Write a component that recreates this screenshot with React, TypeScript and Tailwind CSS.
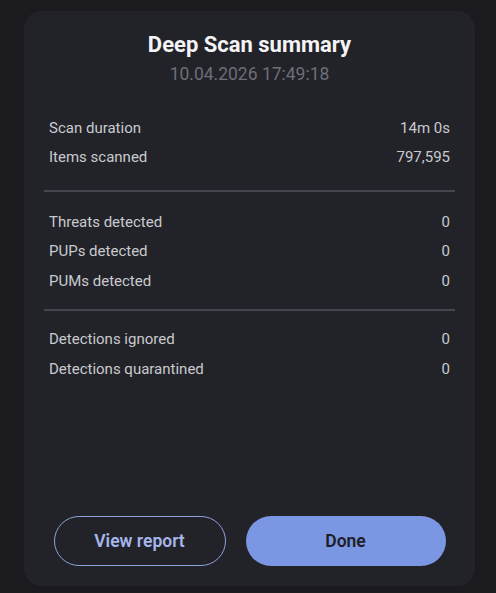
import React from "react";

type Row = { label: string; value: string };

const groups: Row[][] = [
    [
        { label: "Scan duration", value: "14m 0s" },
        { label: "Items scanned", value: "797,595" },
    ],
    [
        { label: "Threats detected", value: "0" },
        { label: "PUPs detected", value: "0" },
        { label: "PUMs detected", value: "0" },
    ],
    [
        { label: "Detections ignored", value: "0" },
        { label: "Detections quarantined", value: "0" },
    ],
];

const SummaryRow = ({ label, value }: Row) => (
    <div className="flex flex-row items-center justify-between h-[29.5px] px-[5px] text-[15px] text-[#c9cacf]">
        <span>{label}</span>
        <span>{value}</span>
    </div>
);

const Divider = ({ className }: { className: string }) => (
    <div className={`h-[2px] bg-[#44454f] ${className}`} />
);

const App = () => {
    return (
        <div
            className="w-[496px] h-[593px] bg-[#1b1b1f] pt-[11px] pl-[24px]"
            style={{ fontFamily: "Roboto, 'Liberation Sans', sans-serif" }}
        >
            <div className="w-[451px] h-[575px] bg-[#222328] rounded-[18px] flex flex-col px-[20px] pt-[20px] pb-[20px]">
                <div className="flex flex-col items-center">
                    <h1 className="text-[22px] leading-[28px] font-bold text-[#f4f4f6]">
                        Deep Scan summary
                    </h1>
                    <p className="text-[17.5px] leading-[24px] mt-[3px] text-[#6c6e78]">
                        10.04.2026 17:49:18
                    </p>
                </div>

                <div className="flex flex-col mt-[27px]">
                    {groups[0].map((r) => (
                        <SummaryRow key={r.label} {...r} />
                    ))}
                    <Divider className="mt-[18px] mb-[15px]" />
                    {groups[1].map((r) => (
                        <SummaryRow key={r.label} {...r} />
                    ))}
                    <Divider className="mt-[13px] mb-[14px]" />
                    {groups[2].map((r) => (
                        <SummaryRow key={r.label} {...r} />
                    ))}
                </div>

                <div className="flex-1" />

                <div className="flex flex-row justify-center gap-[20px]">
                    <button className="w-[172px] h-[50px] rounded-full border border-[#8ea2dd] text-[#a6b6ec] text-[17.5px] font-semibold">
                        View report
                    </button>
                    <button className="w-[200px] h-[50px] rounded-full bg-[#7b96e3] text-[#1d1e25] text-[17.5px] font-semibold">
                        Done
                    </button>
                </div>
            </div>
        </div>
    );
};

export default App;
